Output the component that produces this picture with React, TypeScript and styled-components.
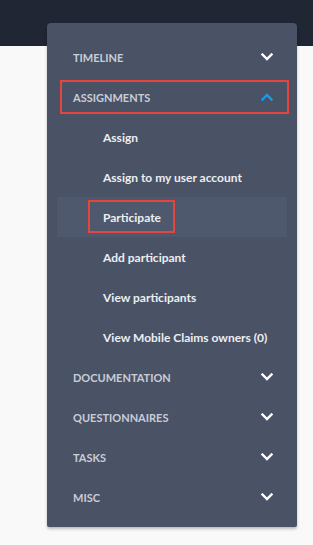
import React from "react";
import styled, { createGlobalStyle } from "styled-components";

const Global = createGlobalStyle`
  html, body { margin: 0; padding: 0; background: #f9f9f9; }
  body { font-family: "Lato", "Liberation Sans", sans-serif; }
`;

const Page = styled.div`
  position: relative;
  width: 313px;
  height: 545px;
  overflow: hidden;
  background: #f9f9f9;
`;

const TopBar = styled.div`
  height: 46px;
  background: #212634;
`;

const Panel = styled.nav`
  position: absolute;
  left: 47px;
  top: 23px;
  width: 250px;
  box-sizing: border-box;
  padding: 14px 10px 10px 10px;
  background: #4a5366;
  border-radius: 4px 4px 2px 2px;
  box-shadow: 0 2px 3px rgba(0, 0, 0, 0.25);
  display: flex;
  flex-direction: column;
`;

const HeaderRow = styled.div<{ $boxed?: boolean }>`
  position: relative;
  height: 40px;
  display: flex;
  align-items: center;
  justify-content: space-between;
  padding: 0 14px 0 16px;
  font-size: 11px;
  font-weight: 700;
  color: #c9cdd6;
  text-transform: uppercase;
  ${(p) =>
    p.$boxed &&
    `
    &::after {
      content: "";
      position: absolute;
      left: 3px;
      right: -2px;
      top: 3px;
      bottom: 3px;
      border: 2px solid #e5453d;
      pointer-events: none;
    }
  `}
`;

const SubRow = styled.div<{ $active?: boolean }>`
  height: 40px;
  display: flex;
  align-items: center;
  padding-left: 46px;
  font-size: 12px;
  font-weight: 700;
  color: #eceef2;
  background: ${(p) => (p.$active ? "#4f596d" : "transparent")};
`;

const Boxed = styled.span`
  position: relative;
  &::after {
    content: "";
    position: absolute;
    left: -15px;
    right: -14px;
    top: -10px;
    bottom: -8px;
    border: 2px solid #e5453d;
  }
`;

const Chevron = ({ up }: { up?: boolean }) => (
  <svg width="12" height="8" viewBox="0 0 12 8" style={{ display: "block" }}>
    <path
      d={up ? "M1.5 6.5 L6 2 L10.5 6.5" : "M1.5 1.5 L6 6 L10.5 1.5"}
      fill="none"
      stroke={up ? "#1a9be6" : "#ffffff"}
      strokeWidth="2.4"
      strokeLinecap="square"
    />
  </svg>
);

const sections = ["Documentation", "Questionnaires", "Tasks", "Misc"];

export default function App() {
  return (
    <>
      <Global />
      <Page>
        <TopBar />
        <Panel>
          <HeaderRow>
            <span>Timeline</span>
            <Chevron />
          </HeaderRow>
          <HeaderRow $boxed>
            <span>Assignments</span>
            <Chevron up />
          </HeaderRow>
          <SubRow>Assign</SubRow>
          <SubRow>Assign to my user account</SubRow>
          <SubRow $active>
            <Boxed>Participate</Boxed>
          </SubRow>
          <SubRow>Add participant</SubRow>
          <SubRow>View participants</SubRow>
          <SubRow>View Mobile Claims owners (0)</SubRow>
          {sections.map((s) => (
            <HeaderRow key={s}>
              <span>{s}</span>
              <Chevron />
            </HeaderRow>
          ))}
        </Panel>
      </Page>
    </>
  );
}
